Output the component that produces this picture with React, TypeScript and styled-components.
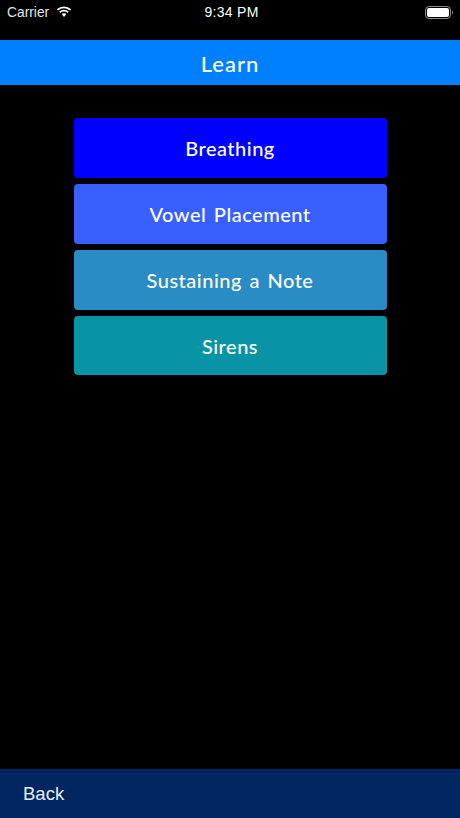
import React from "react";
import styled, { createGlobalStyle } from "styled-components";

const Global = createGlobalStyle`
  html, body { margin: 0; padding: 0; background: #000; }
  #root { height: 818px; }
`;

const Screen = styled.div`
  width: 460px;
  height: 818px;
  background: #000;
  display: flex;
  flex-direction: column;
  overflow: hidden;
`;

const StatusBar = styled.div`
  height: 24px;
  padding: 0 7px 0 7px;
  display: grid;
  grid-template-columns: 1fr auto 1fr;
  align-items: center;
  color: #fff;
  font-family: "Liberation Sans", Arial, sans-serif;
  font-size: 13.8px;
`;

const StatusLeft = styled.div`
  display: flex;
  align-items: center;
  gap: 6.5px;
  color: #e6e6e6;
`;

const StatusTime = styled.div`
  margin-left: 3px;
  font-size: 14px;
  font-weight: 500;
  letter-spacing: 0.3px;
`;

const StatusRight = styled.div`
  display: flex;
  justify-content: flex-end;
  align-items: center;
`;

const Header = styled.header`
  margin-top: 15.5px;
  height: 45px;
  padding-top: 2px;
  box-sizing: border-box;
  background: #0080ff;
  display: flex;
  align-items: center;
  justify-content: center;
  color: #fff;
  font-family: "Lato", "Noto Sans", sans-serif;
  font-size: 22px;
  font-weight: 500;
  letter-spacing: 1px;
`;

const Menu = styled.nav`
  flex: 1;
  display: flex;
  flex-direction: column;
  gap: 6.1px;
  padding: 33.5px 73.5px 0;
`;

const MenuButton = styled.button<{ $bg: string }>`
  height: 59.8px;
  border: 0;
  padding: 1px 0 0;
  border-radius: 4px;
  background: ${(p) => p.$bg};
  color: #fff;
  font-family: "Lato", "Noto Sans", sans-serif;
  font-size: 20px;
  font-weight: 500;
  letter-spacing: 0.5px;
  word-spacing: 2px;
`;

const Footer = styled.footer`
  height: 49px;
  background: #002661;
  display: flex;
  align-items: center;
  padding-left: 23px;
  color: #e8edf5;
  font-family: "Liberation Sans", Arial, sans-serif;
  font-size: 18.5px;
`;

const Wifi = () => (
  <svg width="16" height="12" viewBox="0 0 16 12" fill="#fff">
    <path d="M8 2.2c2.3 0 4.4.9 6 2.4l1.2-1.3A10.6 10.6 0 0 0 8 .4 10.6 10.6 0 0 0 .8 3.3L2 4.6a8.7 8.7 0 0 1 6-2.4z" />
    <path d="M8 5.6c1.4 0 2.6.5 3.6 1.4l1.2-1.3A7 7 0 0 0 8 3.8a7 7 0 0 0-4.8 1.9L4.4 7c1-.9 2.2-1.4 3.6-1.4z" />
    <path d="M8 7.2c-.9 0-1.7.3-2.3.9L8 11l2.3-2.9c-.6-.6-1.4-.9-2.3-.9z" />
  </svg>
);

const Battery = () => (
  <svg width="28" height="13" viewBox="0 0 28 13">
    <rect x="0.5" y="0.5" width="25" height="12" rx="3.5" fill="none" stroke="#8a8a8a" />
    <rect x="2" y="2" width="22" height="9" rx="2" fill="#fff" />
    <path d="M27 4.5c.6.3 1 1.100 1 2s-.4 1.700-1 2z" fill="#8a8a8a" />
  </svg>
);

const items = [
  { label: "Breathing", bg: "#0000ff" },
  { label: "Vowel Placement", bg: "#3860ff" },
  { label: "Sustaining a Note", bg: "#2a8cc4" },
  { label: "Sirens", bg: "#0894a4" },
];

export default function App() {
  return (
    <Screen>
      <Global />
      <StatusBar>
        <StatusLeft>
          <span>Carrier</span>
          <Wifi />
        </StatusLeft>
        <StatusTime>9:34 PM</StatusTime>
        <StatusRight>
          <Battery />
        </StatusRight>
      </StatusBar>
      <Header>Learn</Header>
      <Menu>
        {items.map((item) => (
          <MenuButton key={item.label} $bg={item.bg}>
            {item.label}
          </MenuButton>
        ))}
      </Menu>
      <Footer>Back</Footer>
    </Screen>
  );
}
